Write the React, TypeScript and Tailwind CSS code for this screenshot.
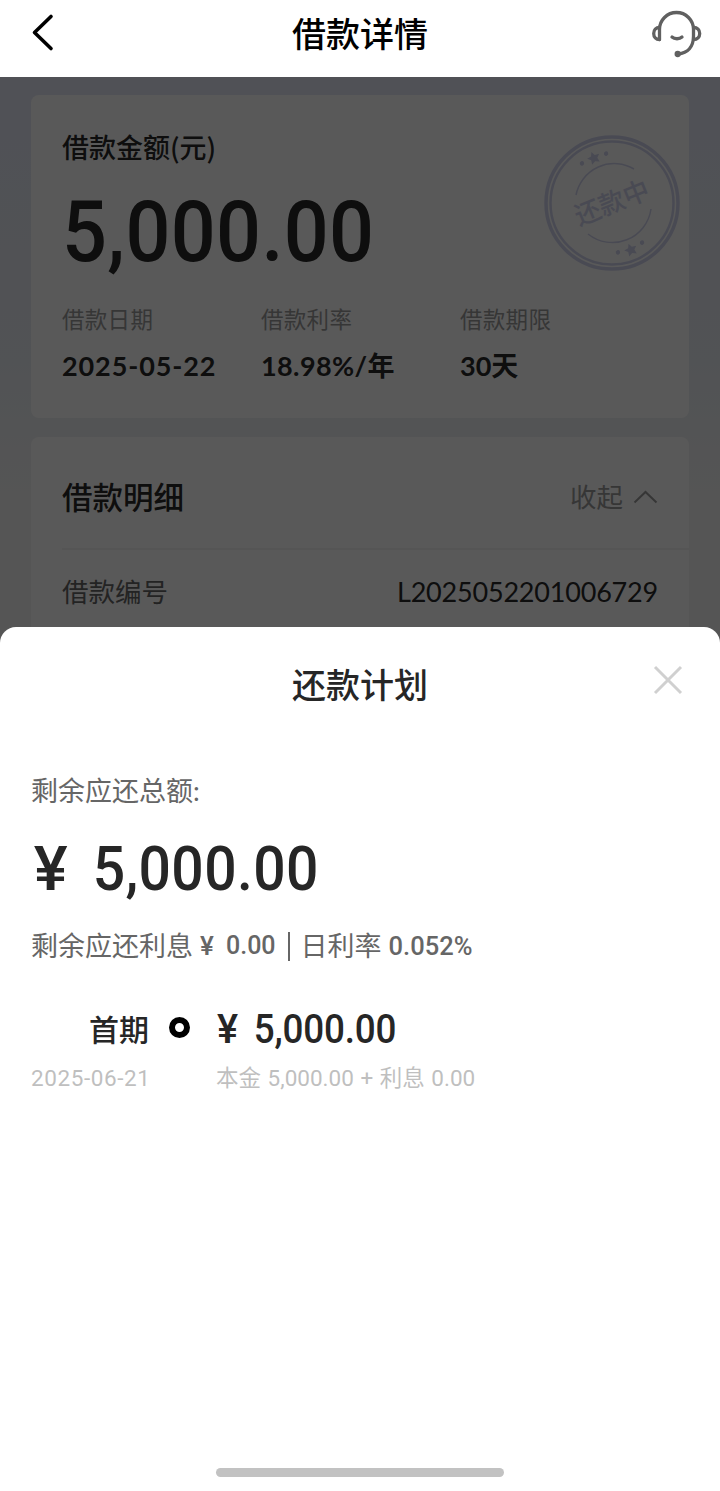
import React from "react";

interface StatProps {
    label: string;
    children: React.ReactNode;
}

const Stat: React.FC<StatProps> = ({ label, children }) => {
    return (
        <div>
            <p className="text-[22.5px] leading-8 tracking-[0.3px] text-[#9c9c9c]">{label}</p>
            <p className="mt-[14px] text-[27px] font-bold leading-8 text-[#2a2a2a]">{children}</p>
        </div>
    );
};

const HeadsetIcon = () => (
    <svg width="52" height="50" viewBox="0 0 52 50" fill="none" stroke="#606060" strokeWidth="3.3" strokeLinecap="round" strokeLinejoin="round">
        <path d="M8.5 30.5V20.5a17 17 0 0 1 34 0V27C42.5 37.500 37 44 27 45" />
        <path d="M8.5 18.500C5 18.500 2.700 21 2.700 24.500S5 30.500 8.500 30.500" />
        <path d="M42.5 18.500C46.500 18.500 48.700 21 48.700 24.500S46.500 30.500 42.500 30.500" />
        <path d="M21 28C23.500 30.300 28.500 30.300 31 28" />
        <circle cx="26.700" cy="45" r="1.500" fill="#606060" />
    </svg>
);

const Stamp = () => (
    <svg width="140" height="140" viewBox="0 0 140 140" fill="none" stroke="#d2d4ee">
        <circle cx="70" cy="70" r="66" strokeWidth="3.500" />
        <circle cx="70" cy="70" r="61.500" strokeWidth="2.500" />
        <path d="M34 62A39 39 0 0 1 92 36" strokeWidth="1.500" />
        <path d="M46 101A39 39 0 0 0 109 76" strokeWidth="1.500" />
        <g transform="rotate(-22 70 70)" fill="#d2d4ee" stroke="none">
            <path d="M70 15l2 4 4.500.6-3.200 3 .8 4.400-4.100-2-4.100 2 .8-4.400-3.200-3 4.500-.6z" />
            <circle cx="57" cy="22" r="2.200" />
            <circle cx="83" cy="22" r="2.200" />
            <path d="M70 114l2 4 4.500.6-3.200 3 .8 4.400-4.100-2-4.100 2 .8-4.400-3.200-3 4.500-.6z" />
            <circle cx="57" cy="118" r="2.200" />
            <circle cx="83" cy="118" r="2.200" />
            <text x="70" y="79" textAnchor="middle" className="text-[26px] font-medium">还款中</text>
        </g>
    </svg>
);

const App = () => {
    return (
        <div className="flex h-[1491px] w-[720px] flex-col overflow-hidden bg-white font-[Lato,'Noto_Sans_CJK_SC',sans-serif]">
            {/* Header */}
            <header className="grid h-[77px] shrink-0 grid-cols-[1fr_auto_1fr] items-center px-[17px] pb-[9px]">
                <svg width="50" height="50" viewBox="0 0 50 50" fill="none" stroke="#000" strokeWidth="3.600" strokeLinecap="round" strokeLinejoin="round">
                    <path d="M34 7.500L17.500 23.500L34 39.500" />
                </svg>
                <h1 className="text-[34px] font-medium leading-[50px] text-black">借款详情</h1>
                <div className="flex justify-end">
                    <HeadsetIcon />
                </div>
            </header>

            {/* Loan details, dimmed behind the sheet */}
            <main className="relative h-[571px] shrink-0 overflow-hidden bg-linear-to-b from-[#e4e8f6] via-[#e9edf2] via-50% to-[#f3f3f3] to-75% px-[31px] pt-[18px]">
                <section className="relative h-[323px] rounded-lg bg-white px-[31px] pt-[34px]">
                    <h2 className="font-['Noto_Sans_CJK_SC',sans-serif] text-[27px] font-medium leading-9 text-[#2a2a2a]">借款金额(元)</h2>
                    <p className="mt-[17px] origin-left scale-x-[0.92] font-[Roboto] text-[86px] font-medium leading-[100px] tracking-[0.4px] text-[#2a2a2a]">5,000.00</p>
                    <div className="mt-[22px] grid grid-cols-[199px_199px_1fr]">
                        <Stat label="借款日期">
                            <span className="tracking-[0.9px]">2025-05-22</span>
                        </Stat>
                        <Stat label="借款利率">
                            <span className="tracking-[0.4px]">18.98%/</span>年
                        </Stat>
                        <Stat label="借款期限">30天</Stat>
                    </div>
                    <div className="absolute top-[38px] right-[7px]">
                        <Stamp />
                    </div>
                </section>

                <section className="mt-[19px] h-[260px] rounded-lg bg-white pl-[31px]">
                    <div className="flex h-[113px] items-center justify-between border-b-2 border-[#f3f3f3] pr-[31px] pt-[9px]">
                        <h2 className="text-[30.500px] font-medium leading-10 text-[#2a2a2a]">借款明细</h2>
                        <div className="flex items-center gap-[10px] text-[26.500px] leading-10 text-[#9c9c9c]">
                            收起
                            <svg width="25" height="16" viewBox="0 0 25 16" fill="none" stroke="#9c9c9c" strokeWidth="2">
                                <path d="M1.500 13.500L12.500 3L23.500 13.500" />
                            </svg>
                        </div>
                    </div>
                    <div className="flex items-center justify-between pr-[31px] pt-[22px] leading-10">
                        <span className="text-[26.500px] text-[#666]">借款编号</span>
                        <span className="text-[27px] tracking-[-0.2px] text-[#2a2a2a]">L2025052201006729</span>
                    </div>
                </section>
                <div className="absolute inset-0 bg-black/65" />
            </main>

            {/* Repayment sheet */}
            <section className="z-10 -mt-[21px] flex flex-1 flex-col rounded-t-[16px] bg-white px-[31px]">
                <div className="grid grid-cols-[1fr_auto_1fr] items-center pt-[33px]">
                    <span />
                    <h2 className="text-[34px] font-medium leading-[50px] text-[#262626]">还款计划</h2>
                    <svg className="-mt-[10px] mr-[6px] justify-self-end" width="30" height="30" viewBox="0 0 30 30" fill="none" stroke="#d0d0d0" strokeWidth="3">
                        <path d="M2 2L28 28M28 2L2 28" />
                    </svg>
                </div>

                <p className="mt-[63px] text-[27px] leading-9 text-[#666]">剩余应还总额:</p>
                <p className="mt-[20px] flex origin-left scale-x-[0.92] font-[Roboto] text-[62px] font-medium leading-[80px] tracking-[0.4px] text-[#262626]">
                    <span className="ml-[3px] w-[64px] origin-left scale-x-[1.12]">¥</span>
                    <span>5,000.00</span>
                </p>
                <div className="mt-[19px] flex items-center text-[27px] leading-9 text-[#666]">
                    <span className="w-[169px]">剩余应还利息</span>
                    <span className="w-[26px] font-[Roboto] text-[26px] font-medium">¥</span>
                    <span className="font-[Roboto] text-[25px] font-medium">0.00</span>
                    <span className="mr-[11px] ml-[12px] h-[29px] w-[2px] bg-[#666]" />
                    <span>日利率</span>
                    <span className="ml-[7px] font-[Roboto] text-[25.500px] font-medium">0.052%</span>
                </div>

                <div className="mt-[43px] grid grid-cols-[118px_67px_1fr] items-center">
                    <p className="-mt-[3px] text-right text-[30px] font-medium leading-[46px] text-[#262626]">首期</p>
                    <span className="-mt-[5px] ml-[20px] size-[21px] rounded-full border-[6px] border-black" />
                    <p className="flex origin-left scale-x-[0.92] font-[Roboto] text-[40px] font-medium leading-[46px] tracking-[-0.2px] text-[#262626]">
                        <span className="ml-[1px] w-[40px] origin-left scale-x-[1.08]">¥</span>
                        <span>5,000.00</span>
                    </p>
                </div>
                <div className="mt-[7px] grid grid-cols-[185px_1fr] text-[22.500px] leading-9 text-[#bfbfbf]">
                    <span className="font-[Roboto] tracking-[0.6px]">2025-06-21</span>
                    <span className="font-[Roboto,'Noto_Sans_CJK_SC',sans-serif] [word-spacing:1px]">本金 5,000.00 + 利息 0.00</span>
                </div>

                <div className="mx-auto mt-auto mb-[14px] h-[9px] w-[288px] rounded-full bg-[#c2c2c2]" />
            </section>
        </div>
    );
};

export default App;
